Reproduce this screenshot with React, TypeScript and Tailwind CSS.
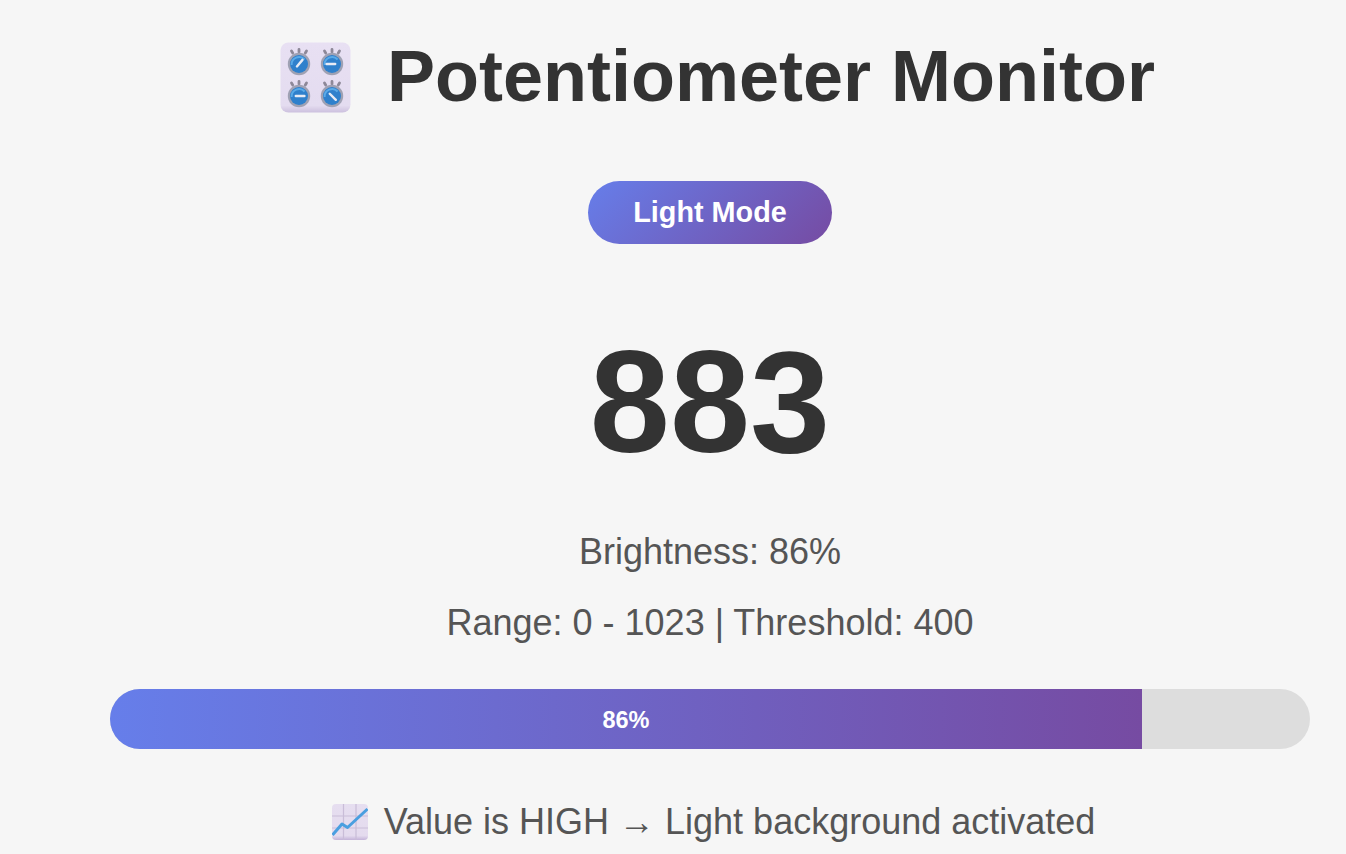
function Knob({ cx, cy, a }: { cx: number; cy: number; a: number }) {
  const r = (a * Math.PI) / 180;
  const x1 = cx - Math.cos(r) * 3.2;
  const y1 = cy - Math.sin(r) * 3.2;
  const x2 = cx + Math.cos(r) * 5.4;
  const y2 = cy + Math.sin(r) * 5.4;
  return (
    <g>
      <path d={`M${cx - 7.5} ${cy - 13}l1.2 2M${cx} ${cy - 14.5}v2.4M${cx + 7.5} ${cy - 13}l-1.2 2`} stroke="#8d8898" strokeWidth="2.8" strokeLinecap="round" />
      <circle cx={cx} cy={cy} r="11.2" fill="#9fa1b3" />
      <circle cx={cx} cy={cy} r="9" fill="#2f80cc" />
      <path d={`M${cx - 7.4} ${cy + 1}a7.5 7.5 0 0 1 13-5.5`} fill="none" stroke="#5aaae8" strokeWidth="2" />
      <line x1={x1} y1={y1} x2={x2} y2={y2} stroke="#e8ebf5" strokeWidth="2.4" strokeLinecap="round" />
    </g>
  );
}

function ControlKnobs() {
  return (
    <svg width="72" height="72" viewBox="0 0 72 72" className="shrink-0 blur-[0.5px]">
      <defs>
        <linearGradient id="pad" x1="0" y1="0" x2="0" y2="1">
          <stop offset="0" stopColor="#e8e0f3" />
          <stop offset="0.9" stopColor="#e4dcf0" />
          <stop offset="1" stopColor="#ccc0de" />
        </linearGradient>
      </defs>
      <rect x="0.5" y="0.5" width="70" height="70" rx="8" fill="url(#pad)" />
      <Knob cx={19} cy={22} a={-50} />
      <Knob cx={52} cy={22} a={180} />
      <Knob cx={19} cy={54} a={0} />
      <Knob cx={52} cy={54} a={45} />
    </svg>
  );
}

function ChartUp() {
  return (
    <svg width="36" height="36" viewBox="0 0 36 36" className="shrink-0 blur-[0.4px]">
      <defs>
        <linearGradient id="chart" x1="0" y1="0" x2="0" y2="1">
          <stop offset="0" stopColor="#e6def0" />
          <stop offset="0.88" stopColor="#e4dbee" />
          <stop offset="1" stopColor="#c3b3d8" />
        </linearGradient>
      </defs>
      <rect x="0" y="0" width="36" height="36" rx="4" fill="url(#chart)" />
      <path d="M11.5 0v36M24 0v36M0 12h36M0 24h36" stroke="#c9bdd8" strokeWidth="1.2" />
      <path d="M0.5 31L10 20L15.5 23.5L35.5 5" fill="none" stroke="#4a9fe0" strokeWidth="3" strokeLinejoin="round" />
    </svg>
  );
}

export default function App() {
  return (
    <div className="h-[854px] overflow-hidden bg-[#f6f6f6] font-['Liberation_Sans',Arial,sans-serif] text-[#333]">
      <div className="ml-[110px] flex w-[1200px] flex-col items-center">
        <h1 className="mt-[35px] flex h-[83px] items-center text-[72px] font-bold leading-[83px]">
          <span className="ml-[15px] mr-[35px] translate-y-[1px]">
            <ControlKnobs />
          </span>
          Potentiometer Monitor
        </h1>
        <button className="mt-[63px] h-[63px] w-[244px] rounded-[32px] bg-linear-[135deg,#667eea,#764ba2] text-[28.8px] font-bold text-white">
          Light Mode
        </button>
        <div className="mt-[76px] text-[144px] font-bold leading-[166px]">883</div>
        <p className="mt-[45px] text-[36px] leading-[41px] text-[#555]">Brightness: 86%</p>
        <p className="mt-[30px] text-[36px] leading-[41px] text-[#555]">Range: 0 - 1023 | Threshold: 400</p>
        <div className="mt-[46px] h-[60px] w-full overflow-hidden rounded-[30px] bg-[#ddd]">
          <div className="flex h-full w-[86%] items-center justify-center bg-linear-[90deg,#667eea,#764ba2] pt-[3px] text-[23.5px] font-bold text-white">
            86%
          </div>
        </div>
        <p className="mt-[52px] ml-[7px] flex items-center text-[36px] leading-[41px] text-[#555]">
          <span className="mr-[16px]">
            <ChartUp />
          </span>
          Value is HIGH → Light background activated
        </p>
      </div>
    </div>
  );
}
